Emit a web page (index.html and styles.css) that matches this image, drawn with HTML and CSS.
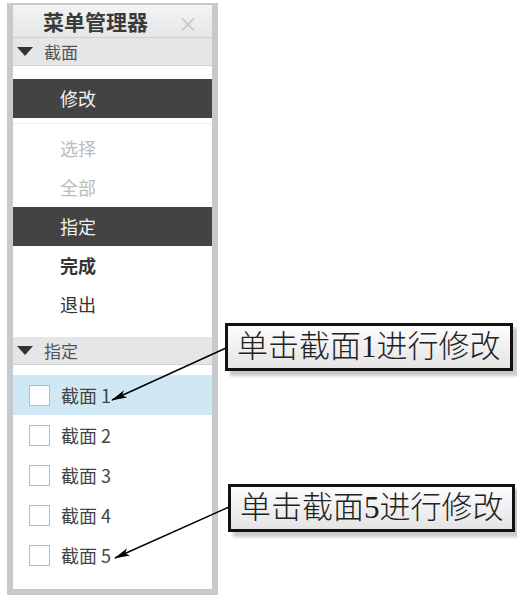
FILE: index.html
```html
<!DOCTYPE html>
<html lang="zh-CN">
  <head>
    <meta charset="UTF-8" />
    <title>菜单管理器</title>
    <link rel="stylesheet" href="styles.css">
  </head>
  <body>
    <div class="stage">
      <!-- Menu manager panel -->
      <div class="panel">
        <div class="panel-title">
          <span>菜单管理器</span>
          <span class="close">×</span>
        </div>

        <div class="group-head"><span class="tri"></span>截面</div>
        <ul class="menu">
          <li class="item dark">修改</li>
          <li class="sep"></li>
          <li class="item off">选择</li>
          <li class="item off">全部</li>
          <li class="item dark">指定</li>
          <li class="item bold">完成</li>
          <li class="item">退出</li>
        </ul>

        <div class="group-head"><span class="tri"></span>指定</div>
        <ul class="checks">
          <li class="check hot"><span class="box"></span>截面 1</li>
          <li class="check"><span class="box"></span>截面 2</li>
          <li class="check"><span class="box"></span>截面 3</li>
          <li class="check"><span class="box"></span>截面 4</li>
          <li class="check"><span class="box"></span>截面 5</li>
        </ul>
      </div>

      <!-- Callouts -->
      <div class="callout one">单击截面<span class="num">1</span>进行修改</div>
      <div class="callout five">单击截面<span class="num">5</span>进行修改</div>

      <svg class="arrows" width="517" height="598" viewBox="0 0 517 598">
        <defs>
          <marker id="head" markerWidth="16" markerHeight="8" refX="15" refY="4" orient="auto" markerUnits="userSpaceOnUse">
            <path d="M0,0 L16,4 L0,8 L4,4 Z" fill="#000" />
          </marker>
        </defs>
        <line x1="226" y1="345" x2="112" y2="397" stroke="#000" stroke-width="1.4" marker-end="url(#head)" />
        <line x1="229" y1="504" x2="115" y2="555" stroke="#000" stroke-width="1.4" marker-end="url(#head)" />
      </svg>
    </div>
  </body>
</html>
```

FILE: styles.css
```css
/* Page */
body {
  margin: 0;
  background: #fff;
  font-family: "Noto Sans CJK SC", "Noto Sans", sans-serif;
  color: #333;
}

.stage {
  position: relative;
  width: 517px;
  height: 598px;
}

ul {
  list-style: none;
  margin: 0;
  padding: 0;
}

/* Panel frame */
.panel {
  margin: 3px 0 0 7px;
  width: 199px;
  height: 584px;
  border: 6px solid #c7cacc;
  border-top-width: 2px;
  background: #fff;
  display: flex;
  flex-direction: column;
}

.panel-title {
  height: 32px;
  display: flex;
  align-items: center;
  justify-content: space-between;
  padding: 0 14px 0 30px;
  background: linear-gradient(#f3f4f4, #e4e6e7);
  border-bottom: 1px solid #cfd1d2;
  font-size: 21px;
  font-weight: bold;
  color: #3a3a3a;
}

.close {
  font-size: 20px;
  font-weight: normal;
  color: #c4c4c4;
  margin-top: 4px;
}

/* Group header with triangle */
.group-head {
  height: 27px;
  display: flex;
  align-items: center;
  gap: 11px;
  padding-left: 4px;
  background: #e4e6e7;
  border-bottom: 1px solid #cfd1d2;
  font-size: 17px;
  color: #555;
}

.tri {
  width: 0;
  height: 0;
  border-left: 8px solid transparent;
  border-right: 8px solid transparent;
  border-top: 9px solid #333;
}

/* Menu entries */
.menu {
  margin: 13px 0 13px;
}

.item {
  height: 39px;
  line-height: 39px;
  padding-left: 47px;
  font-size: 18px;
}

.item.dark {
  background: #434343;
  color: #f2f2f2;
}

.item.off {
  color: #bcbcbc;
}

.item.bold {
  font-weight: bold;
}

.sep {
  height: 11px;
  background: linear-gradient(#fff 5px, #ececec 5px, #ececec 6px, #fff 6px);
}

/* Check list */
.checks {
  margin-top: 10px;
}

.check {
  height: 40px;
  display: flex;
  align-items: center;
  padding-left: 16px;
  font-size: 18px;
  color: #444;
}

.check.hot {
  background: #cfe8f3;
}

.box {
  width: 19px;
  height: 19px;
  border: 1px solid #b9b9b9;
  background: #fff;
  margin-right: 11px;
}

/* Annotation boxes */
.callout {
  position: absolute;
  box-sizing: border-box;
  height: 48px;
  border: 3px solid #111;
  background: linear-gradient(#fdfdfd, #e4e4e4);
  box-shadow: 5px 5px 3px #c9c9c9;
  font-family: "Liberation Serif", "Noto Sans CJK SC", serif;
  font-weight: 300;
  font-size: 31px;
  line-height: 41px;
  color: #222;
  padding-left: 9px;
  white-space: nowrap;
}

.callout.one {
  left: 225px;
  top: 320px;
  width: 288px;
}

.callout.five {
  left: 228px;
  top: 481px;
  width: 287px;
}

.num {
  font-family: "Liberation Serif", serif;
  font-weight: normal;
}

.arrows {
  position: absolute;
  left: 0;
  top: 0;
  pointer-events: none;
}
```
